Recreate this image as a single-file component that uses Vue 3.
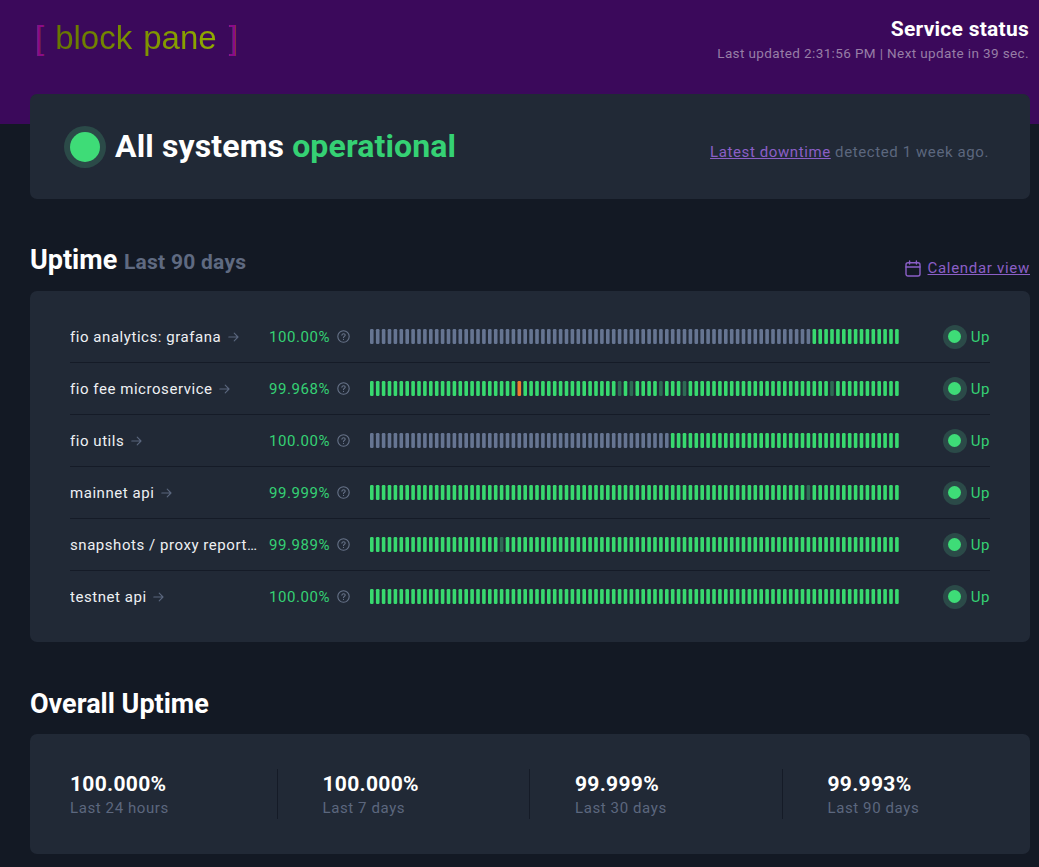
<script setup>
const services = [
  { name: 'fio analytics: grafana', pct: '100.00%', gray: 75, dim: [], orange: [] },
  { name: 'fio fee microservice', pct: '99.968%', gray: 0, dim: [42, 44, 49, 53, 78], orange: [25] },
  { name: 'fio utils', pct: '100.00%', gray: 51, dim: [], orange: [] },
  { name: 'mainnet api', pct: '99.999%', gray: 0, dim: [74], orange: [] },
  { name: 'snapshots / proxy reports', pct: '99.989%', gray: 0, dim: [22], orange: [] },
  { name: 'testnet api', pct: '100.00%', gray: 0, dim: [], orange: [] }
]
const days = Array.from({ length: 90 }, (_, i) => i)
function barClass(s, i) {
  if (i < s.gray) return 'b-gray'
  if (s.orange.includes(i)) return 'b-orange'
  if (s.dim.includes(i)) return 'b-dim'
  return 'b-green'
}
const stats = [
  { v: '100.000%', l: 'Last 24 hours' },
  { v: '100.000%', l: 'Last 7 days' },
  { v: '99.999%', l: 'Last 30 days' },
  { v: '99.993%', l: 'Last 90 days' }
]
</script>

<template>
  <div class="page">
    <header class="top">
      <div class="logo">
        <span class="br">[</span><span class="word">block</span><span class="word w2">pane</span><span class="br b2">]</span>
      </div>
      <div class="svc">
        <div class="svc-title">Service status</div>
        <div class="svc-sub">Last updated 2:31:56 PM | Next update in 39 sec.</div>
      </div>
    </header>

    <main class="main">
      <section class="card hero">
        <div class="hero-left">
          <span class="dot big"><i></i></span>
          <h1>All systems <span class="green">operational</span></h1>
        </div>
        <p class="latest"><a href="#">Latest downtime</a> detected 1 week ago.</p>
      </section>

      <div class="head-row">
        <h2>Uptime <small>Last 90 days</small></h2>
        <a class="cal" href="#">
          <svg width="16" height="17" viewBox="0 0 16 17" fill="none" stroke="currentColor" stroke-width="1.4" stroke-linecap="round" stroke-linejoin="round">
            <rect x="1" y="2.7" width="14" height="13.3" rx="2" />
            <path d="M1 7h14M4.6 1v3M11.4 1v3" />
          </svg>
          <span>Calendar view</span>
        </a>
      </div>

      <section class="card list">
        <div v-for="s in services" :key="s.name" class="row">
          <div class="name">{{ s.name }} <svg class="arrow" width="11" height="10" viewBox="0 0 11 10" fill="none" stroke="currentColor" stroke-width="1.1" stroke-linecap="round" stroke-linejoin="round"><path d="M.8 5h9M6.2 1.2 10 5 6.2 8.8" /></svg></div>
          <div class="pct">{{ s.pct }}</div>
          <svg class="help" width="13" height="13" viewBox="0 0 13 13" fill="none" stroke="currentColor" stroke-width="1.1" stroke-linecap="round">
            <circle cx="6.5" cy="6.5" r="5.7" />
            <path d="M4.9 5.1c.1-.9.8-1.4 1.7-1.4.9 0 1.6.6 1.6 1.4 0 1.2-1.6 1.3-1.7 2.4" />
            <path d="M6.5 9.3v.1" />
          </svg>
          <svg class="bars" width="530" height="15" viewBox="0 0 530 15">
            <rect v-for="i in days" :key="i" :x="i * 5.9" y="0" width="3.6" height="15" rx="1.2" :class="barClass(s, i)" />
          </svg>
          <div class="status"><span class="dot small"><i></i></span><span class="up">Up</span></div>
        </div>
      </section>

      <h2 class="overall">Overall Uptime</h2>

      <section class="card stats">
        <div v-for="st in stats" :key="st.v + st.l" class="stat">
          <div class="v">{{ st.v }}</div>
          <div class="l">{{ st.l }}</div>
        </div>
      </section>
    </main>
  </div>
</template>

<style>
html, body { background: #131924; }
</style>

<style scoped>
.page {
  font-family: Roboto, "Noto Sans", sans-serif;
  color: #fff;
  background: #131924;
  min-height: 867px;
  overflow: hidden;
}
.top {
  height: 124px;
  background: #3b095b;
  padding: 0 10px 0 35px;
  display: flex;
  justify-content: space-between;
  align-items: flex-start;
  box-sizing: border-box;
}
.logo {
  font-family: "Liberation Sans", Arial, sans-serif;
  font-size: 33px;
  line-height: 38px;
  margin-top: 19px;
  display: flex;
  background: linear-gradient(90deg, #667600 20px, #92ac00 185px);
  -webkit-background-clip: text;
  background-clip: text;
  color: transparent;
}
.br { color: #8a0a8a; }
.word { margin-left: 11px; }
.w2 { margin-left: 11px; }
.b2 { margin-left: 12px; }
.svc { text-align: right; margin-top: 17px; }
.svc-title { font-size: 21px; line-height: 24px; font-weight: 700; letter-spacing: .26px; }
.svc-sub { font-size: 13.5px; line-height: 18px; margin-top: 3px; color: #977ea6; letter-spacing: .38px; }

.main { padding: 0 9px 0 30px; margin-top: -30px; position: relative; }
.card { background: #212936; border-radius: 7px; }

.hero {
  height: 105px;
  box-sizing: border-box;
  padding: 0 41px 0 34px;
  display: flex;
  justify-content: space-between;
  align-items: center;
}
.hero-left { display: flex; align-items: center; gap: 9px; }
h1 { margin: 0 0 2px; font-size: 32px; line-height: 38px; font-weight: 700; letter-spacing: .13px; }
.green { color: #35d174; }
.dot { display: flex; align-items: center; justify-content: center; border-radius: 50%; background: #2b4a48; flex: none; }
.dot i { display: block; border-radius: 50%; background: #3edc77; }
.big { width: 42px; height: 42px; }
.big i { width: 30px; height: 30px; }
.small { width: 24px; height: 24px; }
.small i { width: 13px; height: 13px; }
.latest { margin: 11px 0 0; font-size: 15px; color: #5c677e; letter-spacing: .6px; }
a { color: #8b5fc7; }

.head-row {
  display: flex;
  justify-content: space-between;
  align-items: flex-end;
  margin-top: 44px;
  height: 48px;
}
h2 { margin: 0; font-size: 27px; line-height: 34px; font-weight: 700; }
h2 small { font-size: 21px; color: #5f6a81; font-weight: 700; letter-spacing: .25px; }
.head-row h2 { padding-bottom: 12px; }
.cal { display: flex; align-items: center; gap: 7px; font-size: 15px; letter-spacing: .7px; margin-bottom: 14px; text-decoration: none; }
.cal svg { margin-left: 1px; }
.cal span { text-decoration: underline; }

.list { padding: 20px 40px; }
.row {
  display: flex;
  align-items: center;
  height: 52px;
  border-bottom: 1px solid #151b27;
  box-sizing: border-box;
  font-size: 15px;
  letter-spacing: .55px;
}
.row:last-child { border-bottom: 0; height: 51px; }
.name { width: 190px; flex: none; white-space: nowrap; overflow: hidden; text-overflow: ellipsis; color: #eef0f3; }
.arrow { color: #5a667d; margin-left: 2px; }
.pct { width: 70px; flex: none; text-align: right; color: #35d174; }
.help { color: #667288; margin-left: 7px; flex: none; }
.bars { margin-left: 20px; flex: none; }
.b-green { fill: #38d96f; }
.b-gray { fill: #667592; }
.b-dim { fill: #2e6b54; }
.b-orange { fill: #ed7f2c; }
.status { margin-left: auto; display: flex; align-items: center; gap: 4px; color: #35d174; }

.overall { margin-top: 45px; margin-bottom: 13px; }
.stats {
  display: grid;
  grid-template-columns: repeat(4, 1fr);
  gap: 90px;
  padding: 35px 40px;
}
.stat { position: relative; height: 50px; }
.stat:not(:last-child)::after {
  content: "";
  position: absolute;
  right: -45px;
  top: 0;
  bottom: 0;
  width: 1px;
  background: #151b27;
}
.v { font-size: 21px; line-height: 30px; font-weight: 700; letter-spacing: .3px; }
.l { font-size: 15px; line-height: 18px; color: #5c677e; letter-spacing: .6px; }
</style>
